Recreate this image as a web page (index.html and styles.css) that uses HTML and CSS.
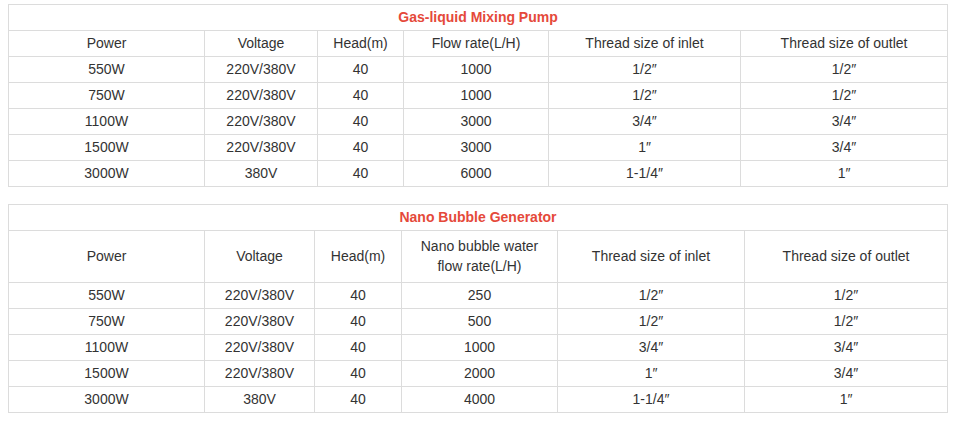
FILE: index.html
```html
<!DOCTYPE html>
<html>
<head>
<meta charset="utf-8">
<link rel="stylesheet" href="styles.css">
</head>
<body>
<div class="page">
<table class="spec">
<colgroup><col class="c1"><col class="c2"><col class="c3"><col class="c4"><col class="c5"><col class="c6"></colgroup>
<tr><td colspan="6" class="title">Gas-liquid Mixing Pump</td></tr>
<tr><td>Power</td><td>Voltage</td><td>Head(m)</td><td>Flow rate(L/H)</td><td>Thread size of inlet</td><td>Thread size of outlet</td></tr>
<tr><td>550W</td><td>220V/380V</td><td>40</td><td>1000</td><td>1/2″</td><td>1/2″</td></tr>
<tr><td>750W</td><td>220V/380V</td><td>40</td><td>1000</td><td>1/2″</td><td>1/2″</td></tr>
<tr><td>1100W</td><td>220V/380V</td><td>40</td><td>3000</td><td>3/4″</td><td>3/4″</td></tr>
<tr><td>1500W</td><td>220V/380V</td><td>40</td><td>3000</td><td>1″</td><td>3/4″</td></tr>
<tr><td>3000W</td><td>380V</td><td>40</td><td>6000</td><td>1-1/4″</td><td>1″</td></tr>
</table>
<table class="spec second">
<colgroup><col class="d1"><col class="d2"><col class="d3"><col class="d4"><col class="d5"><col class="d6"></colgroup>
<tr><td colspan="6" class="title">Nano Bubble Generator</td></tr>
<tr class="tall"><td>Power</td><td>Voltage</td><td>Head(m)</td><td>Nano bubble water<br>flow rate(L/H)</td><td>Thread size of inlet</td><td>Thread size of outlet</td></tr>
<tr><td>550W</td><td>220V/380V</td><td>40</td><td>250</td><td>1/2″</td><td>1/2″</td></tr>
<tr><td>750W</td><td>220V/380V</td><td>40</td><td>500</td><td>1/2″</td><td>1/2″</td></tr>
<tr><td>1100W</td><td>220V/380V</td><td>40</td><td>1000</td><td>3/4″</td><td>3/4″</td></tr>
<tr><td>1500W</td><td>220V/380V</td><td>40</td><td>2000</td><td>1″</td><td>3/4″</td></tr>
<tr><td>3000W</td><td>380V</td><td>40</td><td>4000</td><td>1-1/4″</td><td>1″</td></tr>
</table>
</div>
</body>
</html>
```
FILE: styles.css
```css
body {
  margin: 0;
  background: #fff;
  font-family: "Liberation Sans", Arial, sans-serif;
  font-size: 14px;
  color: #333;
}
.page {
  padding: 4px 9px 0 8px;
  display: flex;
  flex-direction: column;
  gap: 17px;
}
.spec {
  border-collapse: collapse;
  table-layout: fixed;
  width: 940px;
}
.spec td {
  border: 1px solid #dcdcdc;
  height: 24px;
  padding: 0 4px 1px;
  text-align: center;
  vertical-align: middle;
  line-height: 20px;
}
.spec .tall td {
  height: 50px;
}
.spec td.title {
  color: #e5493a;
  font-weight: bold;
}
.c1 { width: 196px; }
.c2 { width: 113px; }
.c3 { width: 86px; }
.c4 { width: 145px; }
.c5 { width: 192px; }
.c6 { width: 207px; }
.d1 { width: 196px; }
.d2 { width: 110px; }
.d3 { width: 87px; }
.d4 { width: 156px; }
.d5 { width: 187px; }
.d6 { width: 203px; }
```
